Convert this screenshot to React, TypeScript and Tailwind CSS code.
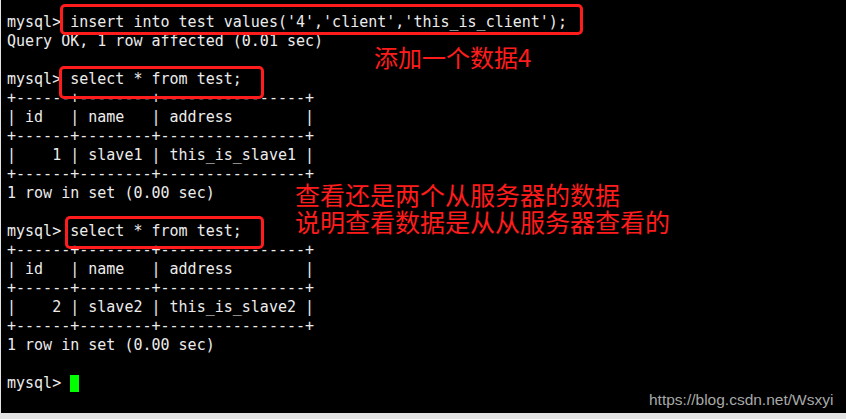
const lines = [
  "mysql> insert into test values('4','client','this_is_client');",
  "Query OK, 1 row affected (0.01 sec)",
  "",
  "mysql> select * from test;",
  "+------+--------+----------------+",
  "| id   | name   | address        |",
  "+------+--------+----------------+",
  "|    1 | slave1 | this_is_slave1 |",
  "+------+--------+----------------+",
  "1 row in set (0.00 sec)",
  "",
  "mysql> select * from test;",
  "+------+--------+----------------+",
  "| id   | name   | address        |",
  "+------+--------+----------------+",
  "|    2 | slave2 | this_is_slave2 |",
  "+------+--------+----------------+",
  "1 row in set (0.00 sec)",
  "",
];

const RedBox = ({ className }: { className: string }) => (
  <div className={`absolute border-[3px] border-[#ff1c1c] rounded-[5px] ${className}`} />
);

export default function App() {
  return (
    <div className="w-[846px] h-[419px] flex flex-col bg-[#e3e3e3]">
      <div className="relative flex-1 bg-black ml-px">
        <pre className="pt-[13px] pl-[6px] font-['DejaVu_Sans_Mono',monospace] text-[15px] leading-[19px] text-[#ececec]">
          {lines.map((l, i) => (
            <div key={i} className="h-[19px] whitespace-pre">{l}</div>
          ))}
          <div className="h-[19px] whitespace-pre flex items-center">
            mysql&gt; <span className="inline-block w-[9px] h-[17px] bg-[#00ff00]" />
          </div>
        </pre>

        {/* annotation boxes drawn over the terminal */}
        <RedBox className="left-[59px] top-[4px] w-[523px] h-[31px]" />
        <RedBox className="left-[58px] top-[66px] w-[205px] h-[33px]" />
        <RedBox className="left-[64px] top-[216px] w-[199px] h-[33px]" />

        <div className="absolute left-[373px] top-[42px] font-['Noto_Sans_CJK_SC',sans-serif] text-[24px] leading-[30px] text-[#ff1c1c]">
          添加一个数据4
        </div>
        <div className="absolute left-[294px] top-[181px] flex flex-col font-['Noto_Sans_CJK_SC',sans-serif] text-[25px] leading-[27px] text-[#ff1c1c]">
          <span>查看还是两个从服务器的数据</span>
          <span>说明查看数据是从从服务器查看的</span>
        </div>

        <div className="absolute left-[648px] top-[391px] font-['Liberation_Sans',Arial,sans-serif] text-[15.5px] leading-[18px] text-[#a8a8a8]">
          https://blog.csdn.net/Wsxyi
        </div>
      </div>
      <div className="h-[6px]" />
    </div>
  );
}
